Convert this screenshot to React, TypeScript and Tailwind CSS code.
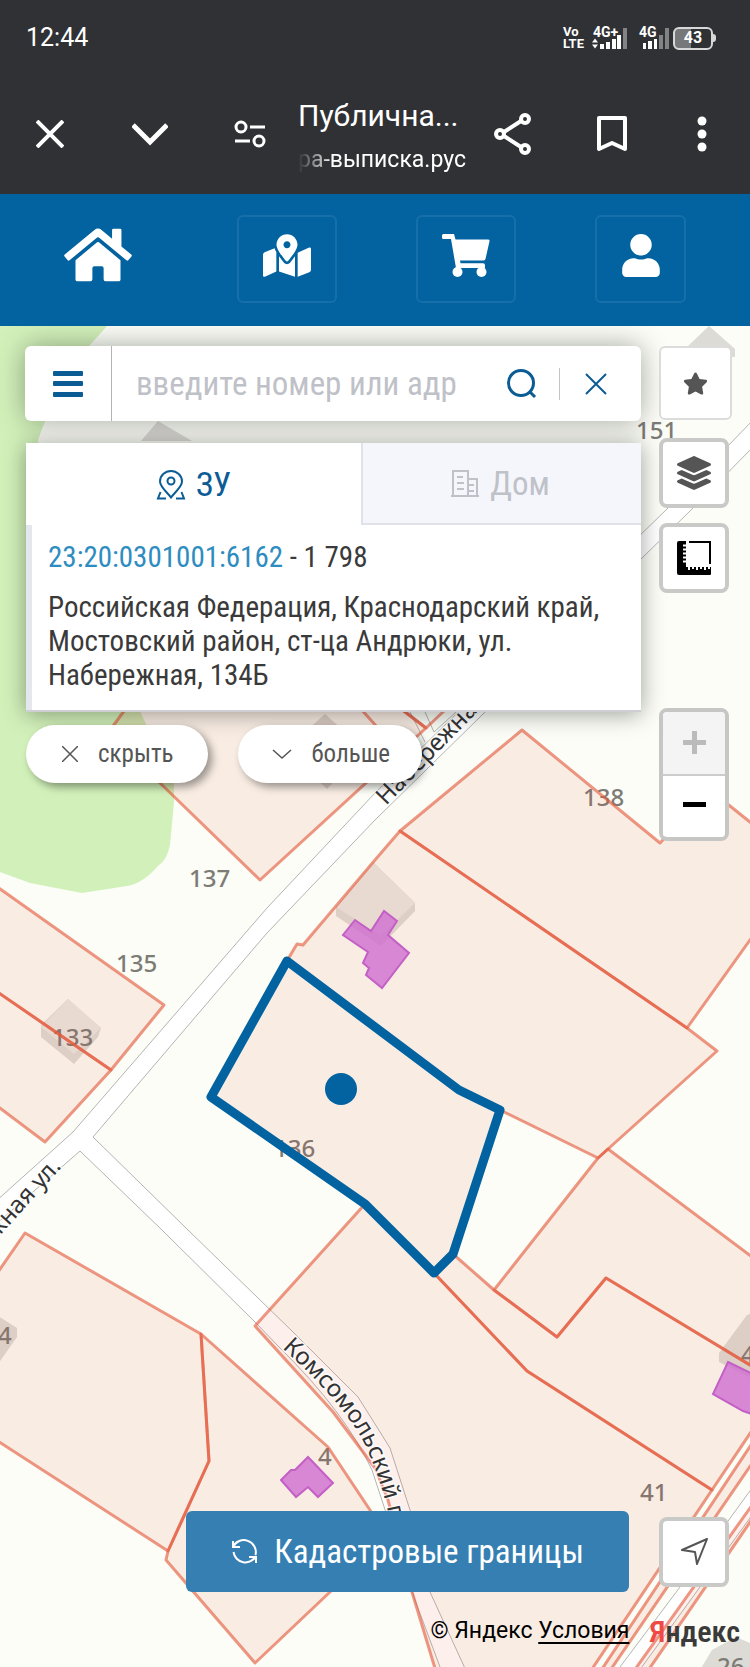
import { useState } from 'react';
import { FaHome, FaLayerGroup, FaMapMarkedAlt, FaStar, FaUser } from 'react-icons/fa';

function CartIcon({ className }: { className?: string }) {
  return (
    <svg className={className} viewBox="0 0 48 43" fill="currentColor">
      <path d="M1.500 0H12l1.500 5.500H46a1.500 1.500 0 0 1 1.500 1.800L43.500 25a2 2 0 0 1-1.800 1.400H18l.5 2.800H41a2 2 0 0 1 2 2V34H14L9 5H1.500A1.500 1.500 0 0 1 0 3.500v-2A1.500 1.500 0 0 1 1.500 0z" />
      <circle cx="15.500" cy="38" r="5" />
      <circle cx="39.500" cy="38" r="5" />
    </svg>
  );
}

const navItems = [
  { label: 'Карта', icon: FaMapMarkedAlt, box: 'w-[100px]', size: 'w-12 h-[43px]' },
  { label: 'Корзина', icon: CartIcon, box: 'w-[100px]', size: 'w-12 h-[43px]' },
  { label: 'Профиль', icon: FaUser, box: 'w-[91px]', size: 'w-[38px] h-[43px]' },
];

const parcels = [
  '132,700 108,733 160,783 260,880 426,728 400,708 350,700',
  '-4,886 164,1005 111,1070 -4,991',
  '-4,991 111,1070 45,1142 -4,1105',
  '287,961 291,954 297,944 303,945 375,860 400,831 687,1028 717,1051 608,1149 598,1158 500,1110 459,1090',
  '400,831 522,730 660,843 710,790 755,826 755,933 687,1028',
  '608,1149 755,1259 755,1368 606,1278 557,1337 494,1290 598,1158',
  '453,1254 494,1290 557,1337 606,1278 755,1368 755,1426 712,1490 527,1371 434,1273',
  '365,1204 255,1326 333,1412 375,1468 388,1500 412,1592 437,1675 588,1675 712,1490 527,1371 434,1273',
  '-4,1275 25,1233 201,1334 209,1461 168,1551 -4,1440',
  '201,1334 328,1447 370,1510 388,1538 330,1592 255,1663 166,1560 168,1551 209,1461',
  '287,961 211,1097 365,1204 434,1273 453,1254 500,1110 459,1090',
  '755,1439 598,1675 607,1675 755,1459',
  '755,1501 631,1675 645,1675 755,1515',
];

const greyBuildings = [
  '158,421 192,441 141,441',
  '709,326 735,349 735,357 688,357 688,346',
  '325,714 345,732 345,770 327,789 305,768 305,732',
  '68,999 101,1028 98,1037 74,1064 41,1037 41,1025',
  '373,862 415,903 415,911 381,946 336,916 336,907',
  '755,1312 747,1315 719,1353 719,1362 755,1380',
  '-2,1316 17,1328 17,1337 -2,1364',
  '694,1680 712,1650 736,1637 755,1645 755,1680',
];

const buildingRoofs = [
  '68,999 101,1028 74,1054 41,1027',
  '373,862 415,903 381,936 336,907',
];

const violetBuildings = [
  '355,920 343,935 368,952 363,963 369,968 366,975 382,988 409,953 388,935 397,921 384,911 371,931',
  '308,1457 333,1483 318,1497 308,1487 296,1497 281,1480 291,1470 295,1470',
  '728,1362 755,1375 755,1415 743,1411 713,1394',
];

const houseNumbers = [
  { x: 636, y: 439, text: '151' },
  { x: 583, y: 806, text: '138' },
  { x: 189, y: 887, text: '137' },
  { x: 116, y: 972, text: '135' },
  { x: 52, y: 1046, text: '133' },
  { x: 274, y: 1157, text: '136' },
  { x: 318, y: 1465, text: '4' },
  { x: 640, y: 1501, text: '41' },
  { x: -2, y: 1344, text: '4' },
  { x: 741, y: 1363, text: '4' },
  { x: 717, y: 1675, text: '26' },
];

function MapLayer() {
  return (
    <svg
      className="absolute inset-0 -z-10 w-full h-full font-['Noto_Sans',sans-serif]"
      viewBox="0 326 750 1341"
      preserveAspectRatio="xMidYMin slice"
      aria-label="Карта участков"
    >
      <defs>
        <path id="naberezhnaya" d="M386 806 L520 668" />
        <path id="naberezhnaya-sw" d="M-122 1374 L5 1230 L62 1167" />
        <path id="komsomolsky" d="M282 1348 Q340 1400 362 1439 Q378 1470 388 1512 L405 1590" />
      </defs>

      <rect x="0" y="326" width="750" height="1341" fill="#fbfdf6" />
      <path
        d="M0 326 H107 L90 345 Q55 390 38 440 L60 620 L137 705 L174 783 V802 L170 845 Q167 860 158 866 Q142 884 127 886 L82 893 L30 883 L0 872 Z"
        fill="#d2f1ba"
      />

      {greyBuildings.map((points) => (
        <polygon key={points} points={points} fill="#dcdbd6" />
      ))}
      {buildingRoofs.map((points) => (
        <polygon key={points} points={points} fill="#e9e8e2" />
      ))}

      {/* roads */}
      <g fill="#fff" stroke="#b4b4b4" strokeWidth="1">
        <path d="M755 418 L668 508 L375 793 L267 908 L73 1132 L-5 1202 V1225 L80 1151 L162 1230 L255 1322 L280 1348 Q345 1412 372 1470 L395 1540 L415 1600 L443 1675 H468 L430 1592 L410 1510 L390 1448 L375 1424 L358 1397 L293 1332 L188 1230 L93 1137 L267 933 L375 820 L693 508 L755 445 Z" />
        <path d="M755 1484 L680 1587 L614 1675 H636 L700 1587 L755 1511 Z" />
        <path d="M410 712 L425 742 M425 712 L434 732 L456 712" fill="none" />
      </g>

      <g fill="#7d7b76" fontSize="24" fontWeight="500">
        {houseNumbers.map((n) => (
          <text key={`${n.x}-${n.y}`} x={n.x} y={n.y}>
            {n.text}
          </text>
        ))}
      </g>

      <g fill="#ea4a2a" fillOpacity="0.09" stroke="#e4583c" strokeOpacity="0.62" strokeWidth="3" strokeLinejoin="round">
        {parcels.map((points) => (
          <polygon key={points} points={points} />
        ))}
        <path d="M360 708 L378 728 M400 708 L426 728 L444 711" fill="none" />
      </g>

      <g fill="#d070d0" fillOpacity="0.82" stroke="#c45fc6" strokeWidth="2">
        {violetBuildings.map((points) => (
          <polygon key={points} points={points} />
        ))}
      </g>

      <g fill="#333" stroke="#fff" strokeOpacity="0.7" strokeWidth="3" paintOrder="stroke" fontSize="24">
        <text>
          <textPath href="#naberezhnaya">Набережная ул.</textPath>
        </text>
        <text textAnchor="end">
          <textPath href="#naberezhnaya-sw" startOffset="100%">Набережная ул.</textPath>
        </text>
        <text>
          <textPath href="#komsomolsky">Комсомольский пер.</textPath>
        </text>
      </g>

      <polygon
        points="287,961 211,1097 365,1204 434,1273 453,1254 500,1110 459,1090"
        fill="none"
        stroke="#0263a0"
        strokeWidth="9"
        strokeLinejoin="round"
      />
      <circle cx="341" cy="1089" r="16" fill="#0263a0" />
    </svg>
  );
}

function StatusBar() {
  return (
    <div className="flex items-center justify-between h-[76px] pl-[26px] pr-[34px]">
      <time className="text-[25px]">12:44</time>
      <div className="flex items-center gap-2">
        <div className="flex flex-col text-[13px] leading-3 font-bold">
          <span>Vo</span>
          <span>LTE</span>
        </div>
        <svg className="w-[35px] h-6 overflow-visible" viewBox="0 0 35 24" fill="currentColor" aria-label="4G+">
          <text x="1" y="11" fontSize="14" fontWeight="700">4G+</text>
          <path d="M0 16.500l3-4 3 4zM0 18.500l3 4 3-4z" />
          <path d="M8 18h4v5h-4zM14 16h4v7h-4zM20 13h4v10h-4zM25 9h4v14h-4z" />
          <path d="M31 2h4v21h-4z" opacity=".4" />
        </svg>
        <svg className="w-[30px] h-6 ml-1 overflow-visible" viewBox="0 0 30 24" fill="currentColor" aria-label="4G">
          <text x="0" y="11" fontSize="14" fontWeight="700">4G</text>
          <path d="M4 17h3v6h-3zM9 15h4v8h-4zM15 13h3v10h-3z" />
          <path d="M20 9h4v14h-4zM26 2h4v21h-4z" opacity=".4" />
        </svg>
        <div className="flex items-center -ml-1">
          <div className="flex items-center justify-center w-10 h-[23px] rounded-md border-2 border-[#d8d8d8] bg-linear-to-r from-[#77787a] from-45% to-transparent to-45% text-base font-bold">
            43
          </div>
          <div className="w-[3px] h-2 bg-[#d8d8d8] rounded-r-sm"></div>
        </div>
      </div>
    </div>
  );
}

function BrowserBar() {
  return (
    <div className="flex items-center h-[118px] pl-7 pr-8 pb-[2px]">
      <button type="button" aria-label="Закрыть" className="p-2">
        <svg className="w-7 h-7" viewBox="0 0 28 28" fill="none" stroke="currentColor" strokeWidth="4">
          <path d="M1 1l26 26M27 1L1 27" />
        </svg>
      </button>
      <button type="button" aria-label="Свернуть" className="ml-14 p-1">
        <svg className="w-9 h-7" viewBox="0 0 36 28" fill="none" stroke="currentColor" strokeWidth="5">
          <path d="M1 5l17 17L35 5" />
        </svg>
      </button>
      <button type="button" aria-label="Настройки сайта" className="ml-[58px] p-1">
        <svg className="w-8 h-7" viewBox="0 0 32 28" fill="none" stroke="currentColor" strokeWidth="3">
          <circle cx="7" cy="7" r="5" />
          <path d="M16 7h15M1 21h15" />
          <circle cx="25" cy="21" r="5" />
        </svg>
      </button>
      <div className="flex-1 min-w-0 ml-7 pt-1">
        <div className="text-[30px] leading-9 whitespace-nowrap">Публична...</div>
        <div className="mt-3 text-[23px] leading-7 whitespace-nowrap mask-l-from-80%">ра-выписка.рус</div>
      </div>
      <button type="button" aria-label="Поделиться" className="ml-4 p-1">
        <svg className="w-10 h-11" viewBox="0 0 40 44" fill="none" stroke="currentColor" strokeWidth="4">
          <circle cx="8" cy="22" r="4" />
          <circle cx="33" cy="7" r="4" />
          <circle cx="33" cy="37" r="4" />
          <path d="M12 20l17-11M12 24l17 11" />
        </svg>
      </button>
      <button type="button" aria-label="В закладки" className="ml-14 p-1">
        <svg className="w-8 h-10" viewBox="0 0 32 40" fill="none" stroke="currentColor" strokeWidth="4" strokeLinejoin="round">
          <path d="M3 4h26v31l-13-6-13 6z" />
        </svg>
      </button>
      <button type="button" aria-label="Меню" className="ml-[54px] p-2">
        <svg className="w-4 h-9" viewBox="0 0 16 36" fill="currentColor">
          <circle cx="8" cy="5" r="4.500" />
          <circle cx="8" cy="18" r="4.500" />
          <circle cx="8" cy="31" r="4.500" />
        </svg>
      </button>
    </div>
  );
}

function SearchBar() {
  const [query, setQuery] = useState('');

  return (
    <form
      className="flex items-center h-[75px] bg-white rounded-md shadow-[0_0_28px_rgba(0,0,0,0.35)]"
      onSubmit={(e) => e.preventDefault()}
    >
      <button type="button" aria-label="Меню карты" className="flex items-center justify-center w-[87px] h-full border-r border-[#b4b4b8]">
        <svg className="w-[30px] h-[26px]" viewBox="0 0 30 26" fill="#0b5c94">
          <rect width="30" height="5" rx="1" />
          <rect y="10" width="30" height="5" rx="1" />
          <rect y="21" width="30" height="5" rx="1" />
        </svg>
      </button>
      <input
        type="text"
        aria-label="Кадастровый номер или адрес"
        placeholder="введите номер или адр"
        value={query}
        onChange={(e) => setQuery(e.target.value)}
        className="flex-1 min-w-0 pl-6 text-[33px] text-[#333] placeholder:text-[#bfc1c8] outline-none"
      />
      <button type="submit" aria-label="Найти" className="ml-4">
        <svg className="w-[30px] h-[30px]" viewBox="0 0 30 30" fill="none" stroke="#0b5c94" strokeWidth="3">
          <circle cx="14" cy="14" r="12.500" />
          <path d="M23 23l5 5" />
        </svg>
      </button>
      <div className="w-px h-8 ml-[22px] mr-[25px] bg-[#c4c4c8]"></div>
      <button type="button" aria-label="Очистить" className="mr-[34px]" onClick={() => setQuery('')}>
        <svg className="w-[22px] h-[22px]" viewBox="0 0 22 22" fill="none" stroke="#0b5c94" strokeWidth="2">
          <path d="M1 1l20 20M21 1L1 21" />
        </svg>
      </button>
    </form>
  );
}

function ResultCard() {
  return (
    <div className="mt-[22px] ml-px bg-white border-b-2 border-[#cfcfd3] shadow-[0_2px_22px_rgba(0,0,0,0.38)]">
      <div className="flex h-[82px] text-[33px]">
        <button type="button" className="flex items-center justify-center gap-[10px] w-[335px] pt-[2px] text-[#0b5c94]">
          <svg className="w-[30px] h-[30px]" viewBox="0 0 30 30" fill="none" stroke="currentColor" strokeWidth="2">
            <path d="M15 27.500C12 23 4 17 4 11.500a11 10.500 0 0 1 22 0C26 17 18 23 15 27.500z" />
            <circle cx="15" cy="11" r="3.500" />
            <path d="M4.500 22L2 28.500h8M25.500 22l2.500 6.500h-8" />
          </svg>
          ЗУ
        </button>
        <button type="button" className="flex items-center justify-center gap-[10px] flex-1 bg-[#f5f6fb] border-l-2 border-b-2 border-[#e0e1e9] pt-[2px] pr-1 text-[#bfc1c8]">
          <svg className="w-[30px] h-[30px]" viewBox="0 0 30 30" fill="none" stroke="currentColor" strokeWidth="2">
            <path d="M1 27h28M3 27V2h15v25M18 10h9v17" />
            <path d="M7 8h6M7 14h7M7 20h7M19 16h5M19 22h5" />
          </svg>
          Дом
        </button>
      </div>
      <div className="h-[185px] pl-4 pr-6 pt-[15px] border-l-6 border-[#e5e7ef] text-[29px] leading-[34px] text-[#3a3a3a]">
        <p>
          <a href="#parcel" className="text-[#2e8dc0]">23:20:0301001:6162</a> - 1 798
        </p>
        <p className="mt-4">
          Российская Федерация, Краснодарский край, Мостовский район, ст-ца Андрюки, ул. Набережная, 134Б
        </p>
      </div>
    </div>
  );
}

function MapControls() {
  const square = 'flex items-center justify-center w-[70px] h-[70px] bg-white border-4 border-[#c9c9c8] rounded-lg';

  return (
    <div className="flex flex-col w-[73px]">
      <button type="button" aria-label="Избранное" className="flex items-center justify-center h-[74px] bg-white border-2 border-[#dcdcdc] rounded-md">
        <FaStar className="w-[25px] h-[25px] text-[#555]" />
      </button>
      <button type="button" aria-label="Слои" className={`${square} mt-[18px]`}>
        <FaLayerGroup className="w-[34px] h-[34px] text-[#555]" />
      </button>
      <button type="button" aria-label="Измерить" className={`${square} mt-[15px]`}>
        <svg className="w-[34px] h-[34px]" viewBox="0 0 34 34">
          <path d="M2 0h7v26h25v7a1 1 0 0 1-1 1H2a2 2 0 0 1-2-2V2a2 2 0 0 1 2-2z" />
          <path d="M6 4.500h4M6 8.500h4M6 12.500h4M6 16.500h4M6 20.500h4M12 24v5M16 24v4M20 24v5M24 24v4M28 24v5M32 24v4" stroke="#fff" strokeWidth="2" />
          <path d="M12 1h21v22" fill="none" stroke="#000" strokeWidth="2" />
        </svg>
      </button>
      <div className="flex flex-col w-[70px] h-[133px] mt-[115px] border-4 border-[#c6c6c4] rounded-lg overflow-hidden">
        <button type="button" aria-label="Приблизить" disabled className="flex items-center justify-center flex-1 bg-[#f4f4f4] border-b-2 border-[#ccc]">
          <svg className="w-[23px] h-[23px]" viewBox="0 0 23 23" stroke="#bbb" strokeWidth="5">
            <path d="M11.500 0v23M0 11.500h23" />
          </svg>
        </button>
        <button type="button" aria-label="Отдалить" className="flex items-center justify-center flex-1 bg-white">
          <svg className="w-[23px] h-[23px]" viewBox="0 0 23 23" stroke="#000" strokeWidth="5">
            <path d="M0 9.500h23" />
          </svg>
        </button>
      </div>
    </div>
  );
}

export default function App() {
  const pill = 'flex items-center h-[58px] bg-white rounded-full text-[25px] text-[#555] shadow-[4px_4px_8px_rgba(0,0,0,0.4)]';

  return (
    <div className="flex flex-col min-h-screen font-['Roboto_Condensed','Roboto',sans-serif]">
      <header className="bg-[#303134] text-white font-['Roboto',sans-serif]">
        <StatusBar />
        <BrowserBar />
      </header>

      <nav className="flex items-start gap-[79px] h-[132px] pl-16 pr-16 pt-[21px] bg-[#0263a0] text-white">
        <a href="#home" aria-label="Главная" className="mt-[10px] mr-auto">
          <FaHome className="w-[68px] h-[60px]" />
        </a>
        {navItems.map(({ label, icon: Icon, box, size }) => (
          <a
            key={label}
            href="#nav"
            aria-label={label}
            className={`flex justify-center h-[88px] pt-[17px] border-2 border-[#166fa9] rounded-md ${box}`}
          >
            <Icon className={size} />
          </a>
        ))}
      </nav>

      <main className="relative isolate flex flex-col flex-1 pt-5 overflow-hidden">
        <MapLayer />

        <div className="flex items-start gap-[18px] pl-[25px] pr-[18px]">
          <div className="flex-1 min-w-0">
            <SearchBar />
            <ResultCard />
            <div className="flex gap-[30px] mt-[13px] ml-px">
              <button type="button" className={`${pill} gap-5 pl-9 pr-[34px]`}>
                <svg className="w-4 h-4" viewBox="0 0 16 16" fill="none" stroke="currentColor" strokeWidth="1.500">
                  <path d="M0 0l16 16M16 0L0 16" />
                </svg>
                скрыть
              </button>
              <button type="button" className={`${pill} gap-5 pl-[34px] pr-8`}>
                <svg className="w-5 h-4" viewBox="0 0 20 16" fill="none" stroke="currentColor" strokeWidth="1.500">
                  <path d="M1 4l9 8 9-8" />
                </svg>
                больше
              </button>
            </div>
          </div>
          <MapControls />
        </div>

        <div className="flex items-center justify-end gap-[30px] mt-auto pr-[21px]">
          <button type="button" className="flex items-center justify-center gap-4 w-[443px] h-[81px] bg-[#367fb3] rounded-md text-[33px] text-white">
            <svg className="w-[27px] h-[27px]" viewBox="0 0 27 27" fill="none" stroke="currentColor" strokeWidth="2">
              <path d="M2 9a12 12 0 0 1 22.500 8M2 3v6h7M25 18a12 12 0 0 1-22.500-4M25 25v-6h-7" />
            </svg>
            Кадастровые границы
          </button>
          <button type="button" aria-label="Моё местоположение" className="flex items-center justify-center w-[70px] h-[70px] bg-white border-4 border-[#c9c9c8] rounded-lg">
            <svg className="w-7 h-7" viewBox="0 0 28 28" fill="none" stroke="#555" strokeWidth="2" strokeLinejoin="round">
              <path d="M27 1L2 12l13 2 2 12z" />
            </svg>
          </button>
        </div>

        <footer className="flex items-center justify-end gap-5 h-[75px] pt-1 pr-[10px] font-['Roboto',sans-serif] text-[23px] text-black">
          <p>
            © Яндекс <a href="#terms" className="underline underline-offset-4">Условия</a>
          </p>
          <span className="font-['Roboto_Condensed','Roboto',sans-serif] text-[30px] font-semibold text-[#3a3a3a]">
            <span className="text-[#f04a45]">Я</span>ндекс
          </span>
        </footer>
      </main>
    </div>
  );
}
